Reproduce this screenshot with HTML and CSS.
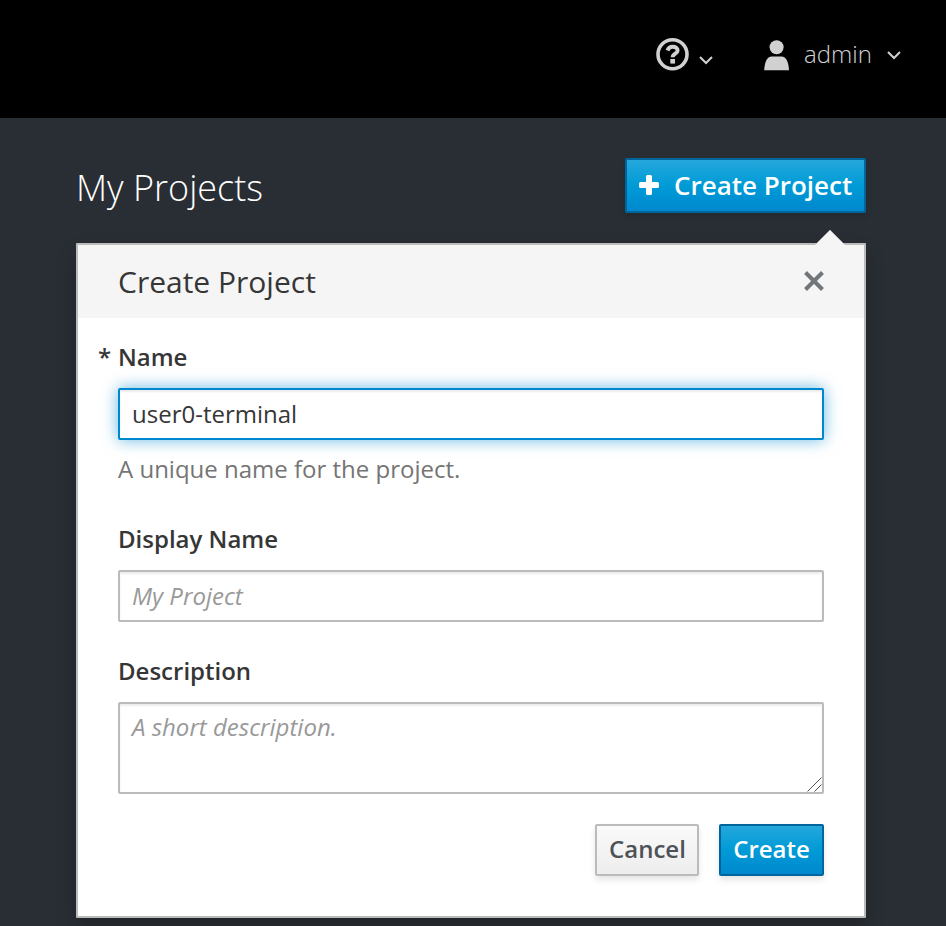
FILE: index.html
```
<!DOCTYPE html>
<html lang="en">
<head>
<meta charset="utf-8">
<title>My Projects</title>
<link rel="stylesheet" href="styles.css">
</head>
<body>
<header class="navbar">
  <div class="nav-help">
    <svg class="help-icon" width="34" height="34" viewBox="0 0 34 34"><circle cx="16.500" cy="17.200" r="14.500" fill="none" stroke="currentColor" stroke-width="3.6"/><path d="M11.500 13.500C12.500 10.800 14.200 9.700 16.700 9.700c3 0 4.900 1.500 4.900 3.800 0 3.300-4.900 3.100-4.900 6.700" fill="none" stroke="currentColor" stroke-width="4"/><path d="M14.300 22h4.700v4.600h-4.700z" fill="currentColor"/></svg>
    <svg class="caret" width="14" height="9" viewBox="0 0 14 9"><path d="M1 1l6 6 6-6"/></svg>
  </div>
  <div class="nav-user">
    <svg class="user-icon" width="26" height="31" viewBox="0 0 26 31"><circle cx="12.600" cy="7.3" r="7"/><path d="M.2 30.3C.6 22.300 2.800 16.500 7.800 16.500h9.600c5 0 7.200 5.800 7.600 13.800z"/></svg>
    <span class="username">admin</span>
    <svg class="caret" width="14" height="9" viewBox="0 0 14 9"><path d="M1 1l6 6 6-6"/></svg>
  </div>
</header>
<main class="page">
  <div class="page-head">
    <h1>My Projects</h1>
    <button class="btn primary large"><svg width="20" height="20" viewBox="0 0 20 20"><path d="M8.500 0h3q1.500 0 1.500 1.500V7h5.500Q20 7 20 8.500v3q0 1.500-1.500 1.500H13v5.500q0 1.500-1.500 1.500h-3Q7 20 7 18.500V13H1.500Q0 13 0 11.500v-3Q0 7 1.500 7H7V1.500Q7 0 8.500 0z"/></svg>Create Project</button>
  </div>
  <section class="popover">
    <svg class="arrow" width="30" height="16" viewBox="0 0 30 16"><path d="M0 16L15 1l15 15z" fill="#f5f5f5"/><path d="M1 15L15 1l14 14" fill="none" stroke="#bbb" stroke-width=".7"/></svg>
    <div class="popover-head">
      <h2>Create Project</h2>
      <svg width="22" height="22" viewBox="0 0 22 22"><path d="M2.500 2.500l17 17M19.500 2.500l-17 17"/></svg>
    </div>
    <form class="form">
      <label class="required" for="name">Name</label>
      <input id="name" class="focused" type="text" value="user0-terminal">
      <p class="help">A unique name for the project.</p>
      <label for="display">Display Name</label>
      <input id="display" type="text" placeholder="My Project">
      <label class="desc-label" for="desc">Description</label>
      <div class="area">
        <textarea id="desc" placeholder="A short description."></textarea>
        <svg class="grip" width="15" height="15" viewBox="0 0 15 15"><path d="M.5 14.500l14-14M7.500 14.500l7-7"/></svg>
      </div>
      <div class="actions">
        <button type="button" class="btn plain">Cancel</button>
        <button type="button" class="btn primary">Create</button>
      </div>
    </form>
  </section>
</main>
</body>
</html>
```
FILE: styles.css
```
* { box-sizing: border-box; }
body {
  margin: 0;
  height: 926px;
  overflow: hidden;
  background: #292e34;
  color: #363636;
  font-family: "Open Sans", sans-serif;
  font-size: 24px;
}
h1, h2, p { margin: 0; }
svg { flex: none; }
.navbar {
  display: flex;
  align-items: flex-start;
  height: 118px;
  padding: 37px 44px 0 656px;
  background: #000;
  color: #d1d1d1;
}
.nav-help, .nav-user { display: flex; }
.nav-help .caret { margin: 19px 0 0 9px; }
.nav-user { margin-left: 51px; }
.user-icon { margin-top: 3px; fill: currentColor; }
.username {
  width: 68px;
  margin-left: 14px;
  font-weight: 300;
  line-height: 34px;
}
.nav-user .caret { margin: 14px 0 0 15px; }
.caret { fill: none; stroke: currentColor; stroke-width: 2; }
.page { padding: 40px 80px 0 76px; }
.page-head {
  display: flex;
  justify-content: space-between;
  height: 55px;
}
h1 {
  color: #fff;
  font-size: 36px;
  font-weight: 300;
  line-height: 60px;
}
.btn {
  height: 52px;
  padding: 0 12px 2px;
  border: 2px solid #bbb;
  border-radius: 2px;
  font: 600 24px/46px "Open Sans", sans-serif;
  box-shadow: 0 4px 6px rgba(3, 3, 3, .1);
}
.plain {
  width: 104px;
  background: linear-gradient(#fafafa, #ededed);
  color: #4d5258;
}
.primary {
  width: 105px;
  border-color: #00659c;
  background: linear-gradient(#25a7dc, #009bd6 50%, #0088ce);
  color: #fff;
}
.large {
  display: flex;
  align-items: center;
  width: 241px;
  height: 55px;
  font-size: 26px;
  white-space: nowrap;
}
.large svg { margin: 0 15px 0 0; fill: #fff; }
.popover {
  position: relative;
  height: 675px;
  margin-top: 30px;
  border: 2px solid #bbb;
  border-radius: 1px;
  background: #fff;
  box-shadow: 0 10px 20px rgba(0, 0, 0, .2);
}
.page-head, .popover { width: 790px; }
.arrow {
  position: absolute;
  top: -16px;
  right: 19px;
}
.popover-head {
  display: flex;
  align-items: center;
  justify-content: space-between;
  height: 73px;
  padding: 0 39px 0 40px;
  background: #f5f5f5;
}
.popover-head svg {
  margin-bottom: 2px;
  fill: none;
  stroke: #72767b;
  stroke-width: 4;
}
h2 { font-size: 30px; font-weight: 400; line-height: 40px; }
.form { padding: 19px 40px 0; }
label {
  display: block;
  font-weight: 600;
  line-height: 40px;
}
.required::before {
  content: "*";
  display: inline-block;
  width: 20px;
  margin-left: -20px;
}
input, textarea {
  display: block;
  width: 706px;
  height: 52px;
  margin: 0;
  padding: 0 12px 2px;
  border: 2px solid #bbb;
  border-radius: 2px;
  outline: 0;
  background: #fff;
  color: #363636;
  font: 400 24px/40px "Open Sans", sans-serif;
  box-shadow: inset 0 2px 2px rgba(3, 3, 3, .075);
}
label + input { margin-top: 11px; }
::placeholder { color: #999; font-style: italic; opacity: 1; }
.focused {
  border-color: #0088ce;
  box-shadow: inset 0 2px 2px rgba(3, 3, 3, .075), 0 0 16px rgba(0, 136, 206, .6);
}
.help {
  margin: 9px 0 30px;
  color: #757575;
  line-height: 40px;
}
.desc-label { margin-top: 29px; }
.area { position: relative; margin-top: 11px; }
textarea { height: 92px; padding-top: 3px; overflow: hidden; resize: none; }
.grip {
  position: absolute;
  right: 2px;
  bottom: 2px;
  fill: none;
  stroke: #555;
  stroke-width: 1;
}
.actions {
  display: flex;
  justify-content: flex-end;
  gap: 20px;
  margin-top: 30px;
}
```
